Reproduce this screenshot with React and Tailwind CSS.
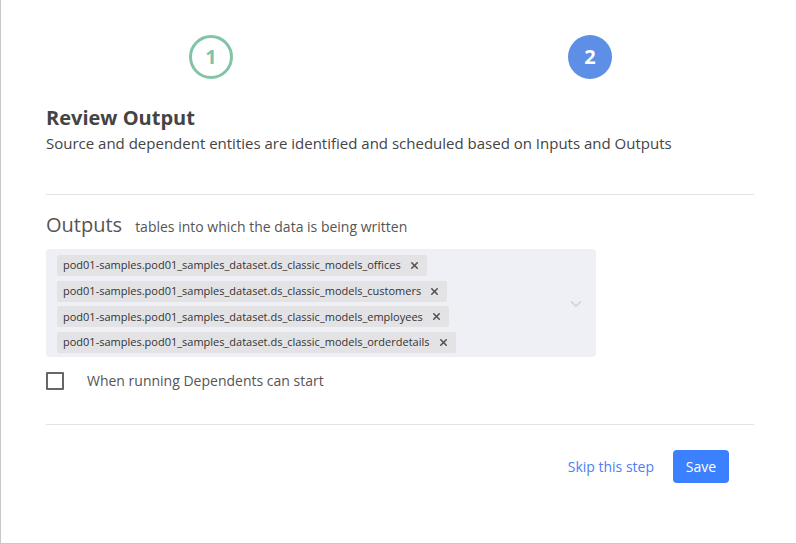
import { ChevronDown, X } from 'lucide-react'

const outputs = [
    'pod01-samples.pod01_samples_dataset.ds_classic_models_offices',
    'pod01-samples.pod01_samples_dataset.ds_classic_models_customers',
    'pod01-samples.pod01_samples_dataset.ds_classic_models_employees',
    'pod01-samples.pod01_samples_dataset.ds_classic_models_orderdetails',
]

function Step({ n, active }) {
    if (active) {
        return (
            <div className="w-[44px] h-[44px] rounded-full bg-[#5d8fe6] text-white flex items-center justify-center text-[20px] font-bold">
                {n}
            </div>
        )
    }
    return (
        <div className="w-[44px] h-[44px] rounded-full border-[3px] border-[#82c4a6] text-[#82c4a6] flex items-center justify-center text-[20px] font-bold">
            {n}
        </div>
    )
}

export default function App() {
    return (
        <div
            className="w-[796px] h-[544px] bg-white border-l border-b border-[#c8c8c8] overflow-hidden text-[#444]"
            style={{ fontFamily: '"Open Sans", "Noto Sans", sans-serif' }}
        >
            <div className="pl-[45px] pr-[42px]">
                <div className="flex pt-[35px] h-[80px]">
                    <div className="ml-[143px]">
                        <Step n={1} />
                    </div>
                    <div className="ml-[335px]">
                        <Step n={2} active />
                    </div>
                </div>

                <h2 className="mt-[23px] text-[20px] font-bold text-[#444] leading-[30px]">Review Output</h2>
                <p className="text-[15px] leading-[20px] text-[#444]">
                    Source and dependent entities are identified and scheduled based on Inputs and Outputs
                </p>

                <div className="mt-[41px] border-t border-[#e3e3e3]" />

                <div className="mt-[16px] flex items-baseline">
                    <span className="text-[20px] leading-[28px] text-[#555]">Outputs</span>
                    <span className="ml-[13px] text-[14px] text-[#555]">tables into which the data is being written</span>
                </div>

                <div className="mt-[10px] w-[550px] rounded-[4px] bg-[#eff0f5] pl-[11px] pt-[6px] pb-[4px] flex items-center">
                    <div className="flex flex-col items-start gap-[4.7px] flex-1">
                        {outputs.map((o) => (
                            <div key={o} className="flex items-center bg-[#e3e3e6] rounded-[2px] h-[21px] pl-[6px] pr-[7px] text-[11px] text-[#333]">
                                <span>{o}</span>
                                <X size={11} strokeWidth={3.5} className="ml-[8px] text-[#555]" />
                            </div>
                        ))}
                    </div>
                    <ChevronDown size={18} strokeWidth={2} className="mr-[11px] text-[#d0d0d4]" />
                </div>

                <label className="mt-[13px] flex items-center">
                    <span className="w-[18px] h-[18px] border-2 border-[#666] rounded-[1px]" />
                    <span className="ml-[23px] text-[14px] text-[#555]">When running Dependents can start</span>
                </label>

                <div className="mt-[33px] border-t border-[#e3e3e3]" />

                <div className="mt-[25px] flex justify-end items-center pr-[25px]">
                    <button className="text-[14px] text-[#4d7ef5]">Skip this step</button>
                    <button className="ml-[19px] h-[33px] w-[56px] rounded-[4px] bg-[#3a80ff] text-white text-[14px]">Save</button>
                </div>
            </div>
        </div>
    )
}
